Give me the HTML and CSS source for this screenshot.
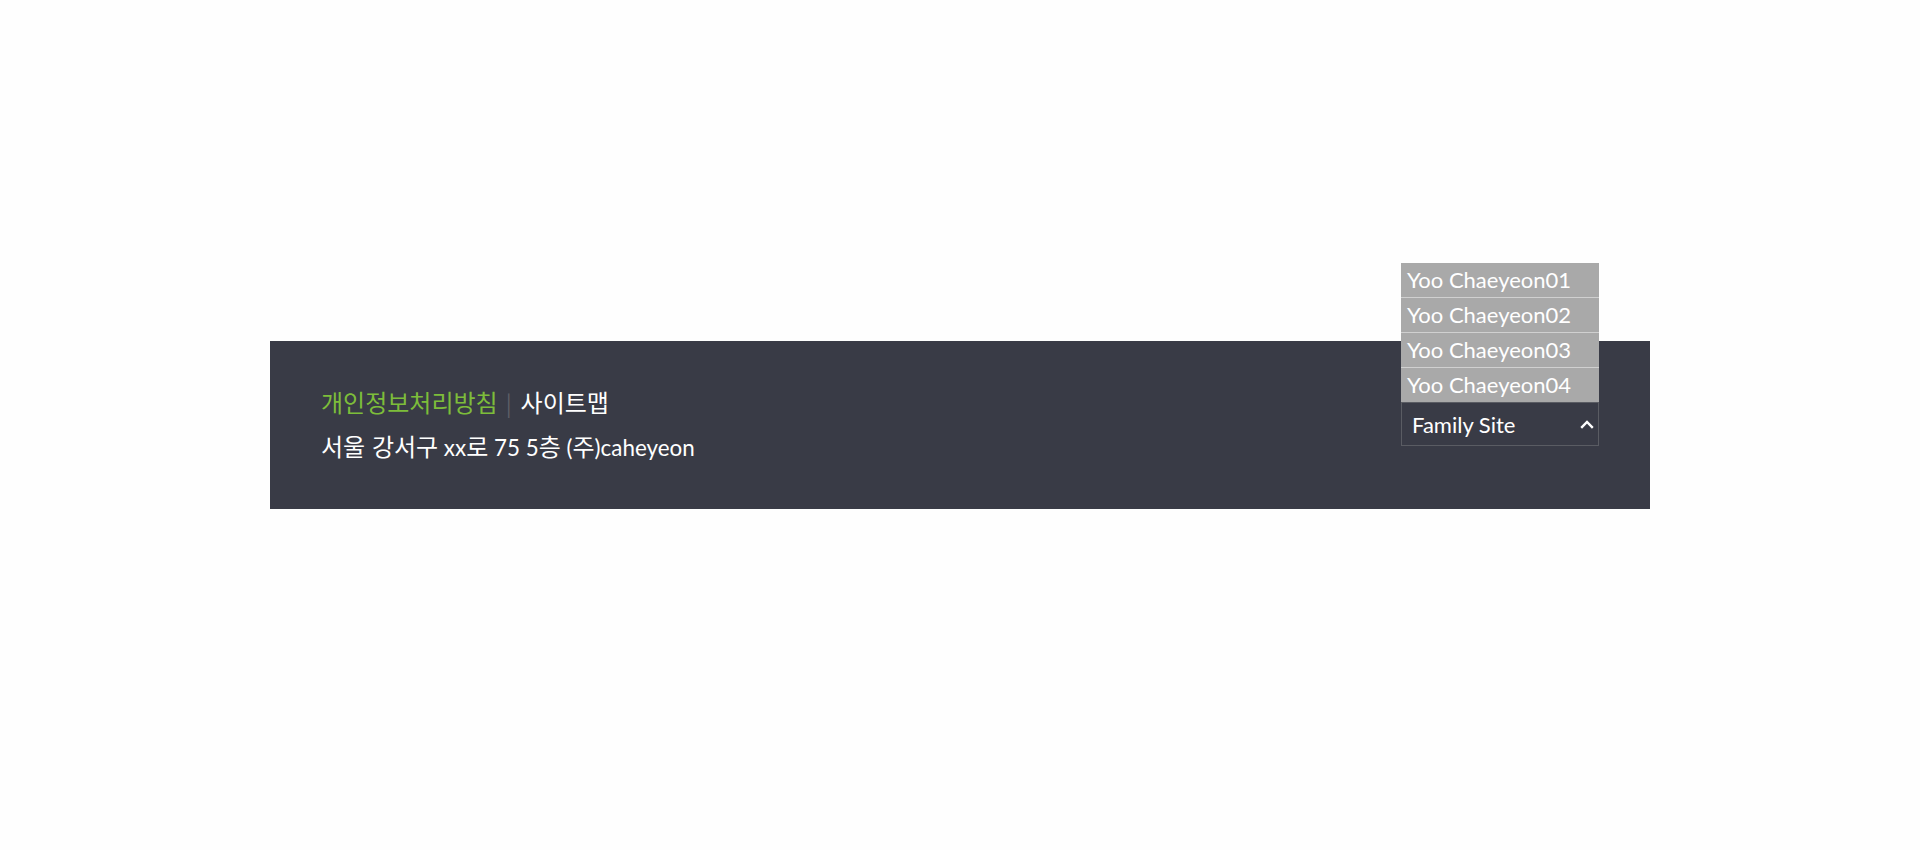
FILE: index.html
```html
<!DOCTYPE html>
<html lang="ko">
<head>
<meta charset="utf-8">
<title>Footer</title>
<link rel="stylesheet" href="styles.css">
</head>
<body>
<footer class="footer">
  <div class="info">
    <p class="links"><a class="policy" href="#">개인정보처리방침</a><span class="sep">|</span><a class="sitemap" href="#">사이트맵</a></p>
    <p class="address"><span class="ko">서울 강서구</span> xx<span class="ko">로</span> 75 5<span class="ko">층</span> (<span class="ko">주</span>)caheyeon</p>
  </div>
  <div class="family">
    <ul class="family-list">
      <li><a href="#">Yoo Chaeyeon01</a></li>
      <li><a href="#">Yoo Chaeyeon02</a></li>
      <li><a href="#">Yoo Chaeyeon03</a></li>
      <li><a href="#">Yoo Chaeyeon04</a></li>
    </ul>
    <button class="family-btn" type="button">
      <span>Family Site</span>
      <svg class="chev" width="14" height="9" viewBox="0 0 14 9"><path d="M1.2 7.8 L7 2 L12.8 7.8" fill="none" stroke="#fff" stroke-width="2.4"/></svg>
    </button>
  </div>
</footer>
</body>
</html>
```
FILE: styles.css
```css
* { box-sizing: border-box; }
html, body { margin: 0; padding: 0; background: #fefefe; }
body {
  font-family: Lato, "Noto Sans CJK KR", sans-serif;
  font-size: 22px;
}
.footer {
  width: 1380px;
  height: 168px;
  margin: 341px auto 0;
  padding: 0 51px;
  background: #393b46;
  display: flex;
  align-items: center;
  justify-content: space-between;
}
.info p { margin: 0; line-height: 34px; color: #fff; }
.info .links { font-family: "Noto Sans CJK KR", sans-serif; font-size: 24px; }
.info .address { margin-top: 10px; font-size: 22.4px; }
.ko { font-family: "Noto Sans CJK KR", sans-serif; font-size: 24px; }
.links a { text-decoration: none; }
.policy { color: #7dbd3a; }
.sitemap { color: #fff; }
.sep { color: #5d5f67; margin: 0 9px 0 8px; font-size: 22px; }
.family {
  position: relative;
  width: 198px;
  margin-top: -2px;
}
.family-list {
  position: absolute;
  left: 0;
  right: 0;
  bottom: 100%;
  margin: 0;
  padding: 0;
  list-style: none;
}
.family-list li {
  background: #a9a9a9;
  height: 35px;
  border-bottom: 1px solid #d0d0d0;
}
.family-list li:last-child { border-bottom: 0; height: 34px; }
.family-list a {
  display: block;
  color: #fff;
  text-decoration: none;
  padding-left: 6px;
  line-height: 34px;
}
.family-btn {
  width: 198px;
  height: 44px;
  border: 1px solid #5a5c63;
  background: transparent;
  color: #fff;
  font: inherit;
  font-size: 22px;
  padding: 0 4px 0 10px;
  display: flex;
  align-items: center;
  justify-content: space-between;
}
.chev { display: block; }
```
